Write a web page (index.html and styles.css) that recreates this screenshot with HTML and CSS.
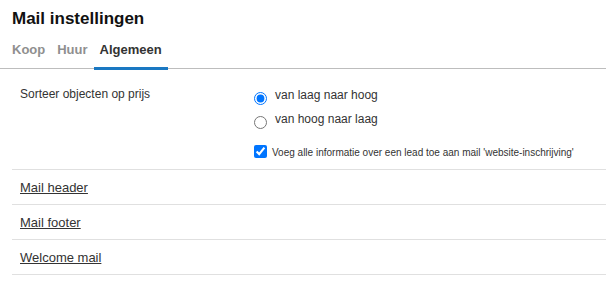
FILE: index.html
```html
<!DOCTYPE html>
<html lang="nl">
<head>
<meta charset="utf-8">
<title>Mail instellingen</title>
<link rel="stylesheet" href="styles.css">
</head>
<body>
<h1 class="title">Mail instellingen</h1>
<nav class="tabs">
  <a class="tab">Koop</a>
  <a class="tab">Huur</a>
  <a class="tab active">Algemeen</a>
</nav>
<section class="settings">
  <div class="row setting">
    <div class="setting-label">Sorteer objecten op prijs</div>
    <div class="setting-options">
      <label class="option"><input type="radio" name="sort" checked><span>van laag naar hoog</span></label>
      <label class="option"><input type="radio" name="sort"><span>van hoog naar laag</span></label>
      <label class="check"><input type="checkbox" checked><span>Voeg alle informatie over een lead toe aan mail 'website-inschrijving'</span></label>
    </div>
  </div>
  <div class="row link-row"><a class="link" href="#">Mail header</a></div>
  <div class="row link-row"><a class="link" href="#">Mail footer</a></div>
  <div class="row link-row"><a class="link" href="#">Welcome mail</a></div>
</section>
</body>
</html>
```

FILE: styles.css
```css
html, body {
  margin: 0;
  padding: 0;
  background: #fff;
}
body {
  font-family: "Liberation Sans", Arial, sans-serif;
  color: #333;
}
.title {
  margin: 0;
  padding: 9px 12px 0;
  font-size: 17px;
  line-height: 20px;
  font-weight: bold;
  color: #111;
}
.tabs {
  display: flex;
  padding-left: 6px;
  border-bottom: 1px solid #bdbdbd;
}
.tab {
  padding: 13px 6px 9px;
  font-size: 13px;
  line-height: 16px;
  font-weight: bold;
  color: #8f8f8f;
  border-bottom: 3px solid transparent;
  margin-bottom: -2px;
  cursor: pointer;
}
.tab.active {
  color: #333;
  border-bottom-color: #1a78c2;
}
.settings {
  display: flex;
  flex-direction: column;
}
.row {
  margin-left: 12px;
  padding-left: 8px;
  border-bottom: 1px solid #e0e0e0;
}
.setting {
  display: flex;
  align-items: flex-start;
  padding-top: 14px;
  padding-bottom: 10px;
}
.setting-label {
  width: 234px;
  margin-top: 4px;
  font-size: 12px;
  line-height: 15px;
}
.setting-options {
  display: flex;
  flex-direction: column;
}
.option {
  display: flex;
  align-items: center;
  height: 24px;
  font-size: 12px;
  line-height: 24px;
}
.option input {
  width: 13px;
  height: 13px;
  margin: 7px 8px 0 0;
}
.check {
  display: flex;
  align-items: flex-start;
  margin-top: 14px;
  font-size: 10px;
  line-height: 13px;
}
.check input {
  width: 13px;
  height: 13px;
  margin: 0 5px 0 0;
}
.check span {
  padding-top: 1px;
}
.link-row {
  padding-top: 8px;
  padding-bottom: 10px;
  height: 16px;
}
.link {
  font-size: 13px;
  line-height: 16px;
  color: #333;
  text-decoration: underline;
}
```
